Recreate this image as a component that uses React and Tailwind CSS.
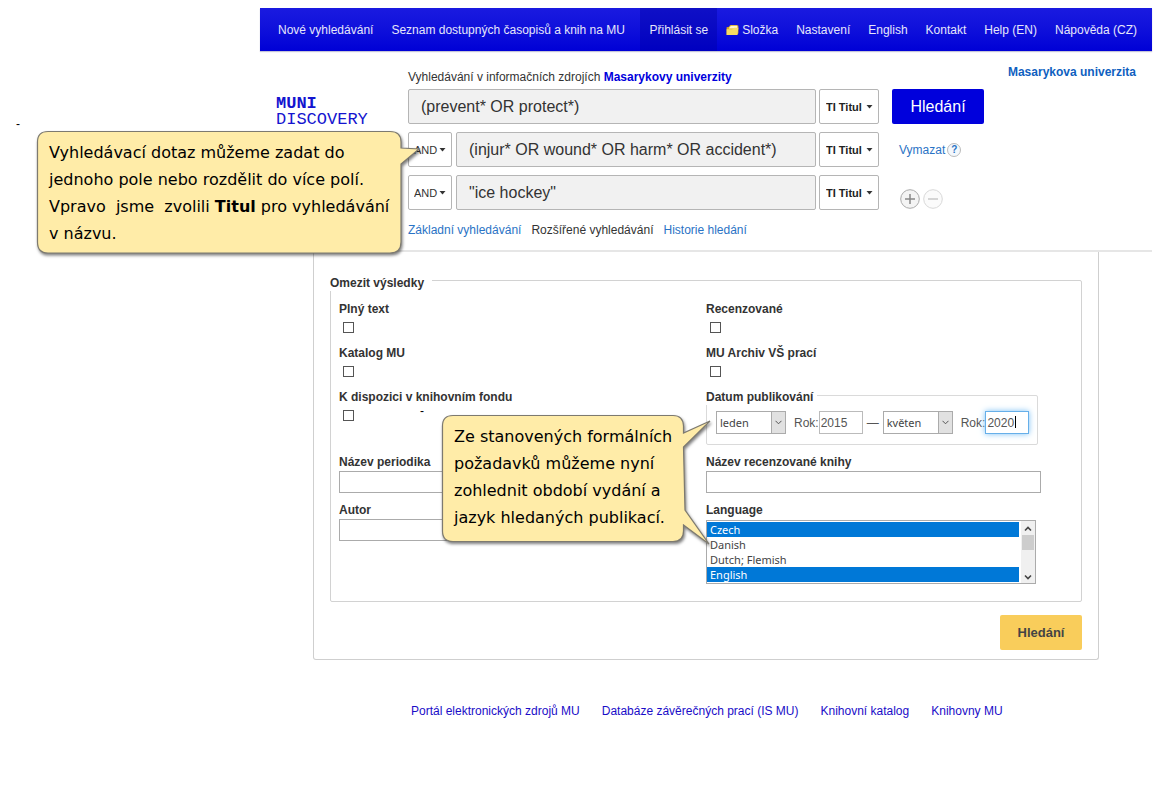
import React from 'react';

const leftNav = ['Nové vyhledávání', 'Seznam dostupných časopisů a knih na MU'];
const rightNav = ['Nastavení', 'English', 'Kontakt', 'Help (EN)', 'Nápověda (CZ)'];
const footerLinks = [
  'Portál elektronických zdrojů MU',
  'Databáze závěrečných prací (IS MU)',
  'Knihovní katalog',
  'Knihovny MU',
];

function FolderIcon() {
  return (
    <svg width="13" height="12" viewBox="0 0 13 12" aria-hidden="true">
      <path d="M.6 3.2l2-.2L4.400 1h6.400l1.600.8v7.400L11 11H.6z" fill="#d9a91f" />
      <path d="M3.200 3.800L5 1.800h6.400v2.600H3z" fill="#fff6cf" />
      <path d="M.6 5.200h5.600l2-1.400h4.200L11.400 11H.6z" fill="#f8dc62" />
    </svg>
  );
}

function Caret() {
  return (
    <svg className="pointer-events-none absolute right-[6px] top-[16px]" width="7" height="4" viewBox="0 0 7 4" aria-hidden="true">
      <path d="M.5 0h6L3.5 3.500z" fill="#333" />
    </svg>
  );
}

function OperatorSelect({ label }) {
  return (
    <div className="relative mr-1">
      <select
        aria-label={label}
        className="h-[35px] w-[44px] appearance-none rounded-[2px] border border-[#b5b5b5] bg-white pl-[5px] text-[11px] text-[#333]"
      >
        <option>AND</option>
        <option>OR</option>
        <option>NOT</option>
      </select>
      <Caret />
    </div>
  );
}

function FieldSelect({ label }) {
  return (
    <div className="relative ml-[3px]">
      <select
        aria-label={label}
        className="h-[35px] w-[60px] appearance-none rounded-[2px] border border-[#b5b5b5] bg-white pl-[6px] text-[11px] font-bold text-[#222]"
      >
        <option>TI Titul</option>
      </select>
      <Caret />
    </div>
  );
}

function SearchRow({ index, value, operator, children }) {
  return (
    <div className="flex h-[35px] items-center">
      <div className="flex w-[408px] items-center">
        {operator && <OperatorSelect label={`Operátor ${index}`} />}
        <input
          type="text"
          aria-label={`Hledaný výraz ${index}`}
          defaultValue={value}
          className="h-[35px] min-w-0 flex-1 rounded-[2px] border border-[#b5b5b5] bg-[#f1f1f1] px-3 text-[16px] text-[#333]"
        />
      </div>
      <FieldSelect label={`Pole ${index}`} />
      {children}
    </div>
  );
}

function CheckField({ id, label, children }) {
  return (
    <div className="h-[44px]">
      <label htmlFor={id} className="block text-[12px] font-bold leading-4">{label}</label>
      <div className="mt-[5px] flex h-[11px] pl-1">
        <input id={id} type="checkbox" className="size-[11px] appearance-none border border-[#555] bg-white" />
        {children}
      </div>
    </div>
  );
}

function TextField({ id, label }) {
  return (
    <div className="h-[48px]">
      <label htmlFor={id} className="block text-[12px] font-bold leading-4">{label}</label>
      <input id={id} type="text" className="mt-px block h-[22px] w-full max-w-[335px] border border-[#ababab] bg-white px-1 text-[12px]" />
    </div>
  );
}

function MonthSelect({ label, value }) {
  return (
    <div className="relative">
      <select
        aria-label={label}
        defaultValue={value}
        className="block h-[23px] w-[70px] appearance-none border border-[#ababab] bg-white pl-[3px] font-['Noto_Sans',sans-serif] text-[11px] text-[#444]"
      >
        <option>leden</option>
        <option>květen</option>
      </select>
      <span className="pointer-events-none absolute inset-y-0 right-0 flex w-[15px] items-center justify-center border border-[#ababab] bg-[#e1e1e1]">
        <svg width="7" height="5" viewBox="0 0 7 5" aria-hidden="true">
          <path d="M.5.8l3 3 3-3" fill="none" stroke="#555" />
        </svg>
      </span>
    </div>
  );
}

function Balloon({ width, height, path, className, lines }) {
  return (
    <div className={className}>
      <svg className="absolute left-0 top-0 overflow-visible" width={width} height={height} aria-hidden="true">
        <path d={path} fill="#ffeca8" stroke="#7d7a70" strokeWidth="1.2" style={{ filter: 'drop-shadow(1px 2px 1.5px rgba(0,0,0,.5))' }} />
      </svg>
      <p className="relative px-3 pt-2 font-['DejaVu_Sans',sans-serif] text-[16px] leading-[27px] text-black">
        {lines.map((line, i) => (
          <span key={i} className="flex whitespace-pre">{line}</span>
        ))}
      </p>
    </div>
  );
}

export default function App() {
  return (
    <div className="relative flex min-h-screen bg-white font-['Liberation_Sans',Arial,sans-serif] text-[12px] leading-4 text-[#333]">
      <aside className="w-[260px] shrink-0 pl-4 pt-[116px] text-black">-</aside>

      <div className="min-w-0 flex-1 pr-2 pt-2">
        <nav className="flex h-[43px] items-stretch justify-between whitespace-nowrap bg-linear-to-b from-[#1a1ae0] to-[#0000d6] pl-[9px] pr-[6px] text-[#e6e6fa] shadow-[0_1px_1px_#c4c4d8]">
          <div className="flex">
            {leftNav.map((t) => (
              <a key={t} href="#" className="flex items-center px-[9px]">{t}</a>
            ))}
          </div>
          <div className="flex">
            <a href="#" className="flex items-center bg-[#0000a0]/40 px-[9px]">Přihlásit se</a>
            <a href="#" className="flex items-center gap-[3px] px-[9px]"><FolderIcon />Složka</a>
            {rightNav.map((t) => (
              <a key={t} href="#" className="flex items-center px-[9px]">{t}</a>
            ))}
          </div>
        </nav>

        <header className="flex items-start border-b-2 border-[#e6e6e6] pb-[12px] pl-4 pr-4">
          <a href="#" aria-label="MUNI Discovery" className="mt-[45px] w-[132px] shrink-0 font-['Liberation_Mono',monospace] text-[17px] leading-4 text-[#1414cf]">
            <strong className="block">MUNI</strong>
            <span className="block">DISCOVERY</span>
          </a>
          <form className="pt-[18px]" onSubmit={(e) => e.preventDefault()}>
            <p>
              Vyhledávání v informačních zdrojích <a href="#" className="font-bold text-[#0000dc]">Masarykovy univerzity</a>
            </p>
            <div className="mt-1 flex flex-col gap-2">
              <SearchRow index={1} value="(prevent* OR protect*)">
                <button type="submit" className="ml-[13px] h-[35px] w-[92px] rounded-[2px] bg-[#0000dc] text-[16px] text-white">Hledání</button>
              </SearchRow>
              <SearchRow index={2} operator value="(injur* OR wound* OR harm* OR accident*)">
                <button type="reset" className="ml-5 text-[#2a73c5]">Vymazat</button>
                <button type="button" aria-label="Nápověda" className="ml-[2px] flex size-[14px] items-center justify-center rounded-full border border-[#bbb] bg-[#f4f8fc] text-[10px] font-bold leading-none text-[#2a73c5]">?</button>
              </SearchRow>
              <SearchRow index={3} operator value={'"ice hockey"'}>
                <div className="mb-px ml-[21px] flex gap-[3px] self-end">
                  <button type="button" aria-label="Přidat řádek" className="size-5">
                    <svg viewBox="0 0 20 20" width="20" height="20" aria-hidden="true">
                      <circle cx="10" cy="10" r="9.3" fill="#f4f4f4" stroke="#aaa" />
                      <path d="M5 10h10M10 5v10" stroke="#888" strokeWidth="1.5" />
                    </svg>
                  </button>
                  <button type="button" aria-label="Odebrat řádek" className="size-5">
                    <svg viewBox="0 0 20 20" width="20" height="20" aria-hidden="true">
                      <circle cx="10" cy="10" r="9.3" fill="#fbfbfb" stroke="#d8d8d8" />
                      <path d="M5 10h10" stroke="#c8c8c8" strokeWidth="1.5" />
                    </svg>
                  </button>
                </div>
              </SearchRow>
            </div>
            <div className="mt-3 flex gap-[10px]">
              <a href="#" className="text-[#2a73c5]">Základní vyhledávání</a>
              <span>Rozšířené vyhledávání</span>
              <a href="#" className="text-[#2a73c5]">Historie hledání</a>
            </div>
          </form>
          <a href="#" className="ml-auto mt-[13px] whitespace-nowrap font-bold text-[#0f5fc0]">Masarykova univerzita</a>
        </header>

        <main>
          <form className="mx-[53px] rounded-b-[3px] border border-t-0 border-[#cfcfcf] px-4 pb-[9px] pt-[17px]" onSubmit={(e) => e.preventDefault()}>
            <fieldset className="rounded-[2px] border border-[#d2d2d2] px-2 pb-[17px]">
              <legend className="relative -ml-[9px] bg-white pr-2 pt-[6px] font-bold">Omezit výsledky</legend>
              <div className="grid grid-cols-2 pt-[10px]">
                <CheckField id="fulltext" label="Plný text" />
                <CheckField id="peer" label="Recenzované" />
                <CheckField id="catalog" label="Katalog MU" />
                <CheckField id="archive" label="MU Archiv VŠ prací" />
                <div className="h-[65px]">
                  <CheckField id="holdings" label="K dispozici v knihovním fondu">
                    <span className="-mt-[5px] ml-[66px] leading-none text-black">-</span>
                  </CheckField>
                </div>
                <div className="h-[65px]">
                  <fieldset className="-mt-1 w-[332px] rounded-[2px] border border-[#dadada] pb-[10px] pl-[9px]">
                    <legend className="relative -ml-[10px] bg-white pr-1 pt-1 font-bold">Datum publikování</legend>
                    <div className="flex items-center pt-[6px] text-[#555]">
                      <MonthSelect label="Měsíc od" value="leden" />
                      <label htmlFor="year-from" className="ml-2">Rok:</label>
                      <input id="year-from" type="text" defaultValue="2015" className="h-[23px] w-[44px] border border-[#bbb] bg-white px-px text-[12px]" />
                      <span className="mx-1">—</span>
                      <MonthSelect label="Měsíc do" value="květen" />
                      <label htmlFor="year-to" className="ml-2">Rok:</label>
                      <div className="relative">
                        <input id="year-to" type="text" defaultValue="2020" className="block h-[23px] w-[44px] border border-[#66afe9] bg-white px-px text-[12px] shadow-[0_0_6px_#7cc0f5]" />
                        <span className="absolute left-[30px] top-[5px] h-3 w-px bg-black" />
                      </div>
                    </div>
                  </fieldset>
                </div>
                <TextField id="journal" label="Název periodika" />
                <TextField id="book" label="Název recenzované knihy" />
                <TextField id="author" label="Autor" />
                <div>
                  <label htmlFor="language" className="block font-bold leading-4">Language</label>
                  <div className="mt-[2px] flex h-16 w-[330px] border border-[#ababab] pt-px">
                    <select
                      id="language"
                      multiple
                      size={4}
                      defaultValue={['Czech', 'English']}
                      className="h-[60px] flex-1 overflow-hidden bg-white p-0 font-['Noto_Sans',sans-serif] text-[11px] text-[#444] outline-none"
                    >
                      {['Czech', 'Danish', 'Dutch; Flemish', 'English'].map((l) => (
                        <option key={l} className="block h-[15px] min-h-0 p-0 pl-[3px] leading-[15px] checked:bg-[linear-gradient(#0078d7,#0078d7)] checked:text-white checked:[-webkit-text-fill-color:white]">{l}</option>
                      ))}
                    </select>
                    <div className="-mt-px ml-[2px] flex w-[14px] flex-col items-center bg-[#f0f0f0]" aria-hidden="true">
                      <svg className="mt-[5px]" width="8" height="6" viewBox="0 0 8 6"><path d="M1 4.5l3-3 3 3" fill="none" stroke="#444" strokeWidth="1.6" /></svg>
                      <span className="mt-[3px] h-[15px] w-3 bg-[#cdcdcd]" />
                      <svg className="mb-[3px] mt-auto" width="8" height="6" viewBox="0 0 8 6"><path d="M1 1.5l3 3 3-3" fill="none" stroke="#444" strokeWidth="1.6" /></svg>
                    </div>
                  </div>
                </div>
              </div>
            </fieldset>
            <div className="mt-[13px] flex justify-end">
              <button type="submit" className="h-[35px] w-[82px] rounded-[2px] bg-[#f9cd5b] text-[13px] font-bold text-[#444]">Hledání</button>
            </div>
          </form>
        </main>

        <footer className="mt-[43px] flex gap-[22px] pl-[151px] text-[#1a0dc8]">
          {footerLinks.map((t) => (
            <a key={t} href="#">{t}</a>
          ))}
        </footer>
      </div>

      <Balloon
        className="absolute left-[37px] top-[131px] h-[122px] w-[364px]"
        width={364}
        height={122}
        path="M11 .5H353Q364 .5 364 11V17L382 18L364 33V111Q364 122 353 122H11Q.5 122 .5 111V11Q.5 .5 11 .5Z"
        lines={[
          'Vyhledávací dotaz můžeme zadat do',
          'jednoho pole nebo rozdělit do více polí.',
          <>
            <span>{'Vpravo  jsme  zvolili '}</span>
            <strong>Titul</strong>
            <span>{' pro vyhledávání'}</span>
          </>,
          'v názvu.',
        ]}
      />
      <Balloon
        className="absolute left-[442px] top-[415px] h-[126px] w-[242px]"
        width={242}
        height={126}
        path="M11 .5H231Q241 .5 241.5 11V18L268 6L241.5 32L243 95L267 129L241.5 110V116Q241.5 126.5 231 126.5H11Q.5 126.5 .5 116V11Q.5 .5 11 .5Z"
        lines={[
          'Ze stanovených formálních',
          'požadavků můžeme nyní',
          'zohlednit období vydání a',
          'jazyk hledaných publikací.',
        ]}
      />
    </div>
  );
}
